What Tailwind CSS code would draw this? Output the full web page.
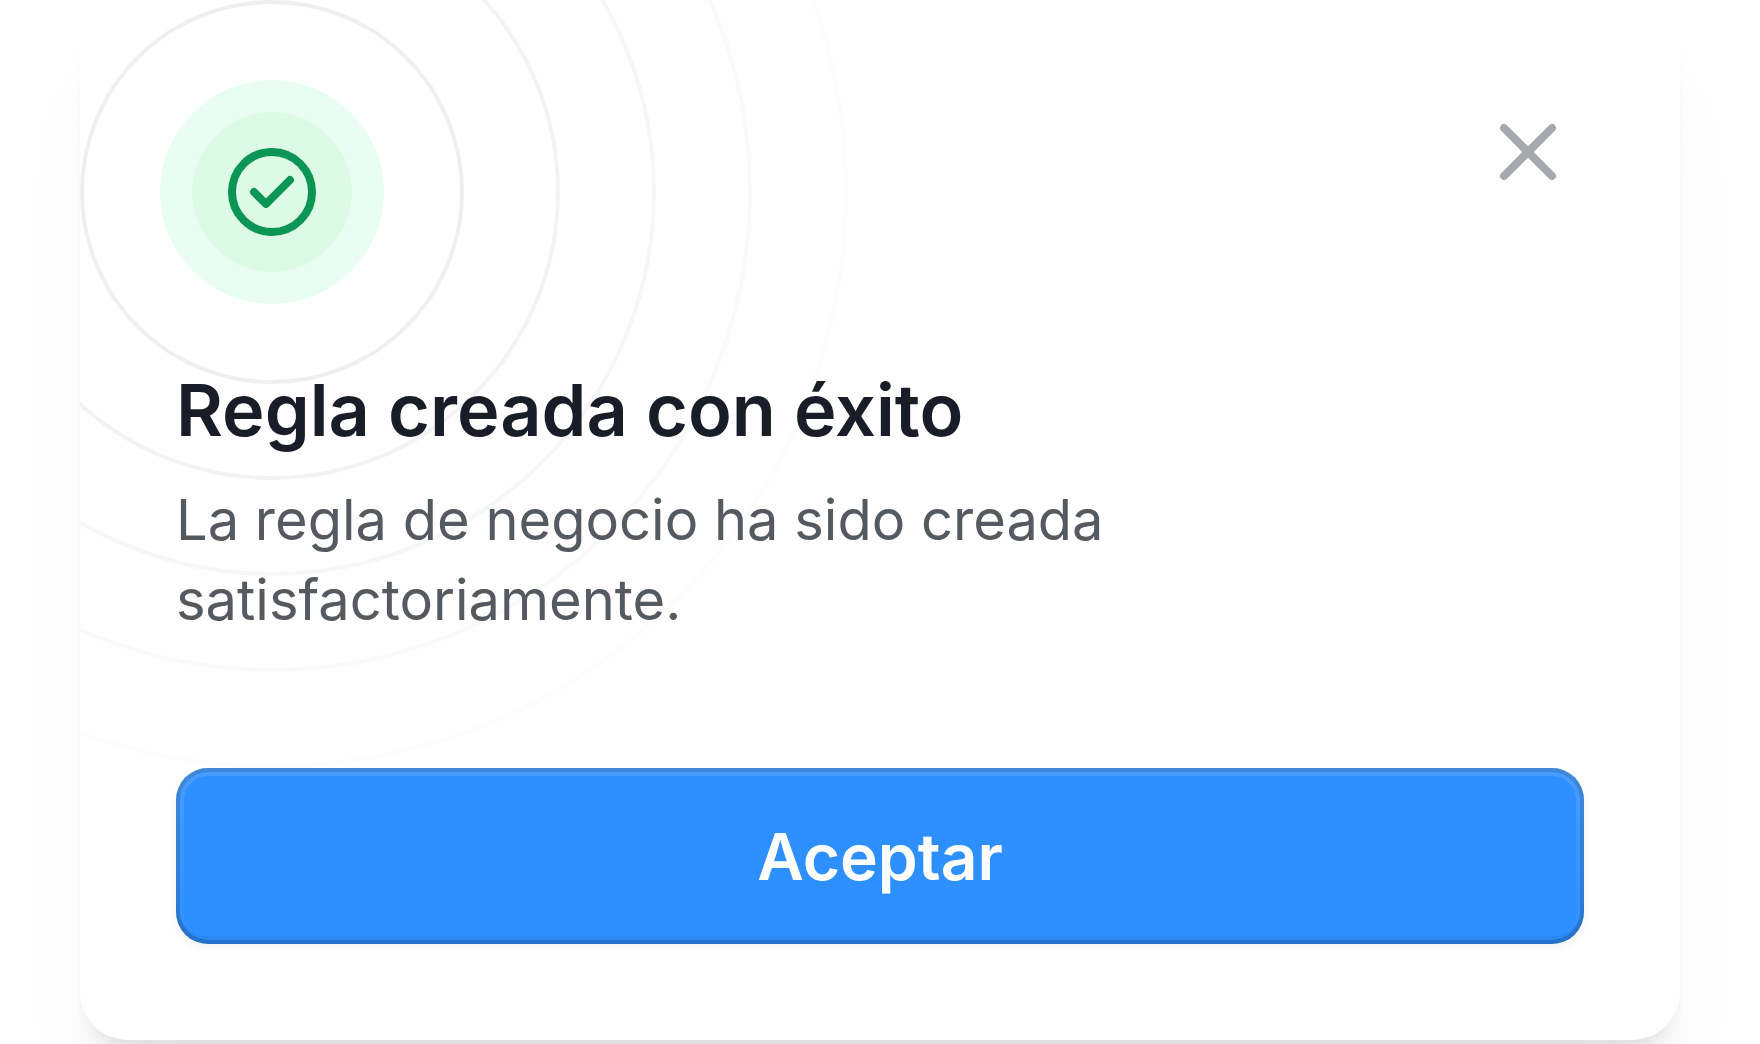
<!DOCTYPE html>
<html lang="es">
<head>
  <meta charset="UTF-8">
  <meta name="viewport" content="width=device-width, initial-scale=1.0">
  <title>Regla creada con éxito</title>
  <script src="https://cdn.jsdelivr.net/npm/@tailwindcss/browser@4"></script>
</head>
<body class="bg-white min-h-screen px-20 pb-1 font-['Inter','Liberation_Sans',sans-serif]">
  <div role="dialog" aria-labelledby="title" aria-describedby="message" class="relative w-full rounded-[48px] bg-white shadow-[0_80px_80px_-16px_rgba(10,13,18,0.06),0_32px_32px_-16px_rgba(10,13,18,0.03),0_12px_12px_-6px_rgba(10,13,18,0.06)]">

    <!-- background rings -->
    <div class="absolute inset-0 overflow-hidden rounded-[48px] pointer-events-none">
      <svg class="absolute -left-96 -top-96 size-[1152px]" viewBox="0 0 1152 1152" fill="none" stroke="url(#fade)" stroke-width="4" aria-hidden="true">
        <defs>
          <radialGradient id="fade" gradientUnits="userSpaceOnUse" cx="576" cy="576" r="640">
            <stop offset="0" stop-color="#e7eaea"></stop>
            <stop offset="1" stop-color="#e7eaea" stop-opacity="0"></stop>
          </radialGradient>
        </defs>
        <circle cx="576" cy="576" r="190"></circle>
        <circle cx="576" cy="576" r="286"></circle>
        <circle cx="576" cy="576" r="382"></circle>
        <circle cx="576" cy="576" r="478"></circle>
        <circle cx="576" cy="576" r="574"></circle>
      </svg>
    </div>

    <div class="relative px-24 pt-20 pb-24">
      <div class="flex items-start justify-between">
        <div class="-ml-4 rounded-full bg-[#eafdf3] p-8">
          <div class="rounded-full bg-[#dcfae6] p-8">
            <svg class="size-24" viewBox="0 0 24 24" fill="none" stroke="#0c9556" stroke-width="2" stroke-linecap="round" stroke-linejoin="round" aria-hidden="true">
              <circle cx="12" cy="12" r="10"></circle>
              <path d="M7.5 12l3 3 6-6"></path>
            </svg>
          </div>
        </div>
        <button type="button" id="close" aria-label="Cerrar" class="-mr-2 mt-2 rounded-2xl p-4 text-[#a7a8ae] hover:text-gray-500 cursor-pointer">
          <svg class="size-24" viewBox="0 0 24 24" fill="none" stroke="currentColor" stroke-width="2" stroke-linecap="round" aria-hidden="true">
            <path d="M18 6L6 18M6 6l12 12"></path>
          </svg>
        </button>
      </div>

      <h2 id="title" class="mt-12 text-[72px] leading-[116px] font-semibold text-[#181d27]">Regla creada con éxito</h2>
      <p id="message" class="mt-3 max-w-[1000px] text-[56px] leading-[80px] text-[#555a61]">La regla de negocio ha sido creada satisfactoriamente.</p>

      <button type="button" id="accept" class="relative mt-32 h-44 w-full rounded-[32px] bg-[#2e90ff] pt-0.5 text-[64px] leading-[96px] font-semibold text-white cursor-pointer shadow-[0_4px_8px_rgba(10,13,18,0.05),inset_0_0_0_4px_rgba(10,13,18,0.18),inset_0_-8px_0_rgba(10,13,18,0.05)]">
        <span class="absolute inset-0 rounded-[32px] p-2 bg-linear-to-b from-white/12 to-white/0 pointer-events-none [mask:linear-gradient(#000_0_0)_content-box_exclude,linear-gradient(#000_0_0)]"></span>
        Aceptar
      </button>
    </div>
  </div>

  <script>
    const dialog = document.querySelector('[role="dialog"]');
    ['close', 'accept'].forEach(id => {
      document.getElementById(id).addEventListener('click', () => dialog.remove());
    });
  </script>
</body>
</html>
